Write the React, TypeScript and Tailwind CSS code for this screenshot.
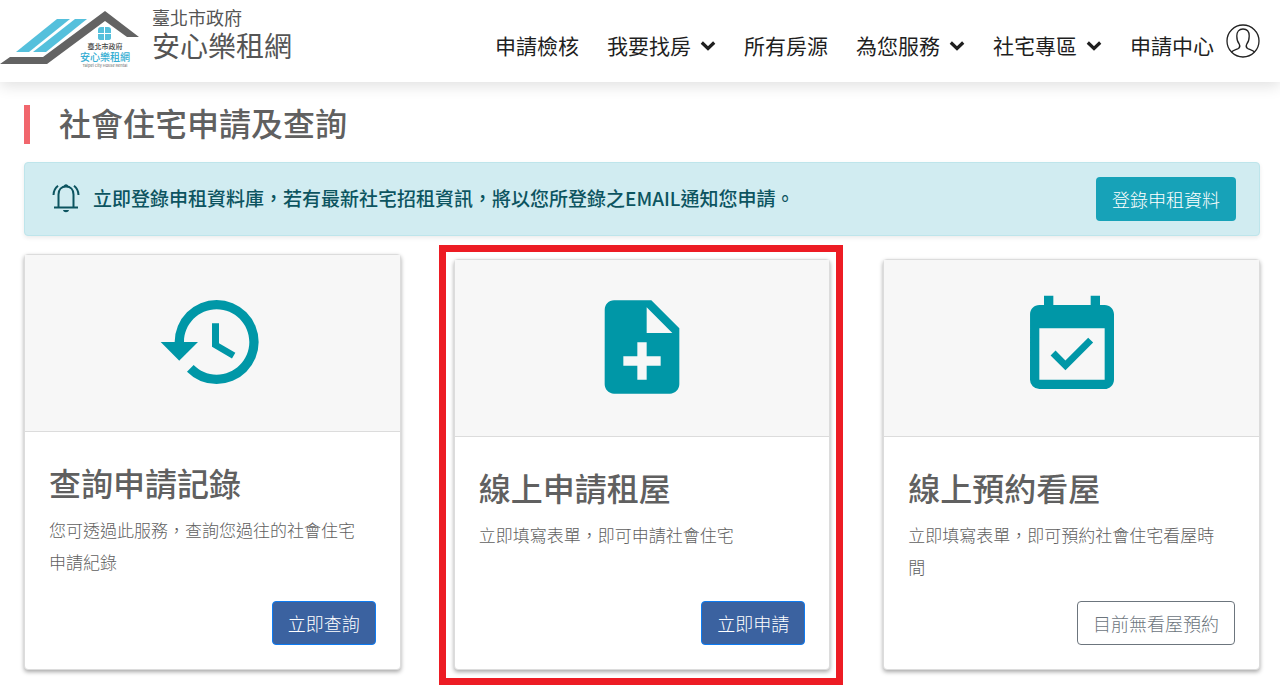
import React from 'react';
import { MdEventAvailable, MdHistory, MdNoteAdd } from 'react-icons/md';
import type { IconType } from 'react-icons';

interface NavItem {
  label: string;
  hasMenu?: boolean;
}

interface ServiceCardProps {
  icon: IconType;
  title: string;
  description: string;
  action: string;
  unavailable?: boolean;
  highlighted?: boolean;
  className?: string;
}

const NAV_ITEMS: NavItem[] = [
  { label: '申請檢核' },
  { label: '我要找房', hasMenu: true },
  { label: '所有房源' },
  { label: '為您服務', hasMenu: true },
  { label: '社宅專區', hasMenu: true },
  { label: '申請中心' },
];

const Logo: React.FC = () => (
  <svg viewBox="0 0 140 72" className="h-[72px] w-[140px] shrink-0" aria-hidden="true">
    <path d="M57 18H70L29 51H16Z" fill="#55c0dc" />
    <path d="M75 18H87L46 51H33Z" fill="#55c0dc" />
    <path d="M0 63L10 56H43L105 10L139 36H127L105 20L47 63Z" fill="#636363" />
    <g fill="#55c0dc">
      <path d="M104 26V32H98V29Q98 26 101 26Z" />
      <path d="M105 26H108Q111 26 111 29V32H105Z" />
      <path d="M98 33H104V39H101Q98 39 98 37Z" />
      <path d="M105 33H111V37Q111 39 108 39H105Z" />
    </g>
    <text x="105" y="48" textAnchor="middle" fontSize="7" fontWeight="500" fill="#444">臺北市政府</text>
    <text x="105" y="60" textAnchor="middle" fontSize="10" fontWeight="500" fill="#35aed3">安心樂租網</text>
    <text x="105" y="66" textAnchor="middle" fontSize="4" fill="#666">Taipei City House Rental</text>
  </svg>
);

const Chevron: React.FC = () => (
  <svg viewBox="0 0 16 10" className="mt-[2px] h-[10px] w-4" fill="none" stroke="currentColor" strokeWidth={3.2} aria-hidden="true">
    <path d="M1.800 1.500L8 7.500L14.200 1.500" />
  </svg>
);

const Avatar: React.FC = () => (
  <svg viewBox="0 0 34 34" className="h-[34px] w-[34px]" fill="none" stroke="#222" strokeWidth={1.3} aria-hidden="true">
    <circle cx="17" cy="17" r="16" />
    <path d="M5.500 28C7 26 10.500 25.500 12.500 24.500C14 23.500 14 21.500 13.200 20C11.500 18 10.800 15.500 10.800 12C10.800 7.500 13 5 17 5C21 5 23.200 7.500 23.200 12C23.200 15.500 22.500 18 20.800 20C20 21.500 20 23.500 21.500 24.500C23.500 25.500 27 26 28.500 28" />
  </svg>
);

const Bell: React.FC = () => (
  <svg viewBox="0 0 28 32" className="h-8 w-7 shrink-0" fill="none" stroke="currentColor" strokeWidth={2} aria-hidden="true">
    <path d="M2 25.500H26M6.500 25V12.500C6.500 7.500 9.500 4.500 14 4.500S21.500 7.500 21.500 12.500V25" />
    <path d="M1.500 13C1.600 9 3.200 6 6 3.800M26.500 13C26.400 9 24.800 6 22 3.800" />
    <path d="M11.500 5C11.500 1.200 16.500 1.200 16.500 5ZM11 28H17C16.400 31 11.600 31 11 28Z" fill="currentColor" stroke="none" />
  </svg>
);

const ServiceCard: React.FC<ServiceCardProps> = ({
  icon: Icon,
  title,
  description,
  action,
  unavailable,
  highlighted,
  className = '',
}) => (
  <div className={`relative flex flex-col ${className}`}>
    <section className="flex flex-1 flex-col rounded-sm border border-[#dcdcdc] bg-white shadow-[0_2px_4px_rgba(0,0,0,0.35)]">
      <div className="flex justify-center border-b border-[#dcdcdc] bg-[#f7f7f7] pt-[31px] pb-[33px]">
        <Icon className="h-28 w-28 text-[#0097a7]" />
      </div>
      <div className="flex flex-1 flex-col px-6 pt-7 pb-6">
        <h2 className="text-[32px] leading-[44px] font-medium text-[#606060]">{title}</h2>
        <p className="mt-[10px] mb-[18px] pr-2 text-[17px] leading-8 font-light text-[#606060]">{description}</p>
        <button
          type="button"
          className={`mt-auto h-11 self-end rounded border px-[15px] text-[18px] font-light ${
            unavailable ? 'border-[#6c757d] bg-white text-[#6c757d]' : 'border-[#0d7bf2] bg-[#3b62a0] text-white'
          }`}
        >
          {action}
        </button>
      </div>
    </section>
    {highlighted && (
      <div className="pointer-events-none absolute -top-[14px] -right-[13px] -bottom-[15px] -left-[15px] border-7 border-[#ed1c24]" />
    )}
  </div>
);

export default function App() {
  return (
    <div lang="zh-Hant" className="bg-white pb-7 font-['Noto_Sans_CJK_TC',sans-serif]">
      <header className="flex h-[82px] items-center justify-between bg-white pr-5 shadow-[0_4px_14px_rgba(0,0,0,0.12)]">
        <a href="#" className="flex items-center gap-3 pb-2">
          <Logo />
          <span className="flex flex-col pb-2 text-[#555]">
            <span className="text-[18px] leading-6">臺北市政府</span>
            <span className="text-[28px] leading-8">安心樂租網</span>
          </span>
        </a>
        <div className="flex items-center gap-3">
          <nav className="flex gap-7 pt-2 text-[21px] leading-7 text-[#1f1f1f]">
            {NAV_ITEMS.map((item) => (
              <a key={item.label} href="#" className="flex items-center gap-[9px]">
                {item.label}
                {item.hasMenu && <Chevron />}
              </a>
            ))}
          </nav>
          <button type="button" aria-label="會員">
            <Avatar />
          </button>
        </div>
      </header>

      <main className="pt-[23px] pr-5 pl-6">
        <h1 className="border-l-6 border-[#f1666d] pb-1 pl-[29px] text-[32px] leading-[35px] font-medium text-[#606060]">
          社會住宅申請及查詢
        </h1>

        <div className="mt-[18px] flex items-center justify-between rounded border border-[#bee5eb] bg-[#d1ecf1] py-[14px] pr-[23px] pl-[27px] shadow-[0_2px_4px_rgba(0,0,0,0.08)]">
          <p className="flex items-center gap-[13px] pb-[2px] text-[19px] leading-7 font-medium text-[#0c5460]">
            <Bell />
            立即登錄申租資料庫，若有最新社宅招租資訊，將以您所登錄之EMAIL通知您申請。
          </p>
          <button type="button" className="h-11 rounded bg-[#17a2b8] px-4 text-[18px] font-light text-white">
            登錄申租資料
          </button>
        </div>

        <div className="mt-[18px] grid grid-cols-3 gap-[53px]">
          <ServiceCard
            icon={MdHistory}
            title="查詢申請記錄"
            description="您可透過此服務，查詢您過往的社會住宅申請紀錄"
            action="立即查詢"
          />
          <ServiceCard
            icon={MdNoteAdd}
            title="線上申請租屋"
            description="立即填寫表單，即可申請社會住宅"
            action="立即申請"
            highlighted
            className="mt-[5px]"
          />
          <ServiceCard
            icon={MdEventAvailable}
            title="線上預約看屋"
            description="立即填寫表單，即可預約社會住宅看屋時間"
            action="目前無看屋預約"
            unavailable
            className="mt-[5px]"
          />
        </div>
      </main>
    </div>
  );
}
